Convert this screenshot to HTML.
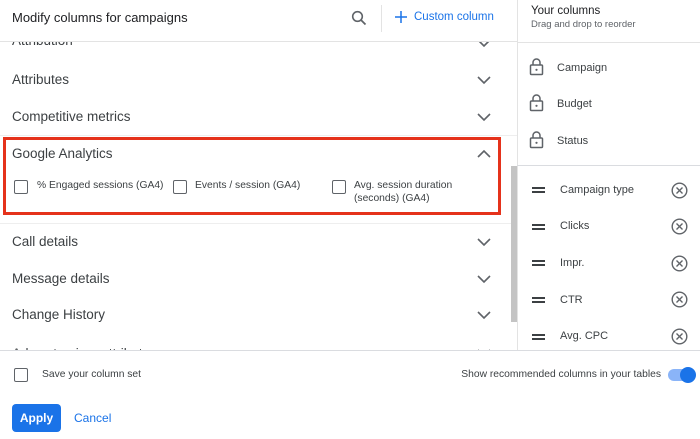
<!DOCTYPE html>
<html><head><meta charset="utf-8"><style>
*{margin:0;padding:0;box-sizing:border-box}
body{width:700px;height:439px;overflow:hidden;background:#fff;font-family:"Liberation Sans",sans-serif;color:#202124;position:relative}
.a{position:absolute;white-space:nowrap}
.row{position:absolute;left:12px;font-size:13.5px;color:#3c4043}
.chev{position:absolute;left:477px}
.cb{position:absolute;width:14px;height:14px;border:1.6px solid #5f6368;border-radius:2px}
.lab{position:absolute;font-size:10.3px;color:#3c4043;line-height:13px}
.rt{position:absolute;left:557px;font-size:11px;color:#3c4043}
.rt2{position:absolute;left:560px;font-size:11px;color:#3c4043}
</style></head><body>
<div class="a" style="left:0;top:0;width:517px;height:350px;overflow:hidden">
 <div class="a" style="left:12px;top:33px;font-size:13.5px;color:#3c4043">Attribution</div>
 <svg class="chev" style="top:38px" width="14" height="10"><path d="M1 2l6 6 6-6" fill="none" stroke="#5f6368" stroke-width="1.6"/></svg>
 <div class="a" style="left:0;top:0;width:517px;height:42px;background:#fff;border-bottom:1px solid #e3e3e3"></div>
</div>
<div class="a" style="left:12px;top:10px;font-size:13px;color:#202124">Modify columns for campaigns</div>
<svg class="a" style="left:351px;top:10px" width="16" height="16"><circle cx="6.5" cy="6.5" r="4.8" fill="none" stroke="#5f6368" stroke-width="1.6"/><path d="M10 10l4.5 4.5" stroke="#5f6368" stroke-width="1.8"/></svg>
<div class="a" style="left:381px;top:5px;width:1px;height:27px;background:#e3e3e3"></div>
<svg class="a" style="left:395px;top:11px" width="12" height="12"><path d="M6 0v12M0 6h12" stroke="#1a73e8" stroke-width="1.5"/></svg>
<div class="a" style="left:414px;top:11px;font-size:11.5px;color:#1a73e8">Custom column</div>

<div class="row" style="top:72px">Attributes</div>
<svg class="chev" style="top:75px" width="14" height="10"><path d="M1 2l6 6 6-6" fill="none" stroke="#5f6368" stroke-width="1.6"/></svg>
<div class="row" style="top:109px">Competitive metrics</div>
<svg class="chev" style="top:112px" width="14" height="10"><path d="M1 2l6 6 6-6" fill="none" stroke="#5f6368" stroke-width="1.6"/></svg>
<div class="a" style="left:0;top:135px;width:517px;height:1px;background:#eee"></div>

<div class="a" style="left:3px;top:137px;width:498px;height:78px;border:3px solid #e5321b"></div>
<div class="row" style="top:146px">Google Analytics</div>
<svg class="chev" style="top:149px" width="14" height="10"><path d="M1 8l6-6 6 6" fill="none" stroke="#5f6368" stroke-width="1.6"/></svg>
<div class="cb" style="left:14px;top:180px"></div>
<div class="lab" style="left:37px;top:179px">% Engaged sessions (GA4)</div>
<div class="cb" style="left:173px;top:180px"></div>
<div class="lab" style="left:195px;top:179px">Events / session (GA4)</div>
<div class="cb" style="left:332px;top:180px"></div>
<div class="lab" style="left:354px;top:179px">Avg. session duration<br>(seconds) (GA4)</div>
<div class="a" style="left:0;top:223px;width:511px;height:1px;background:#eee"></div>

<div class="row" style="top:234px">Call details</div>
<svg class="chev" style="top:237px" width="14" height="10"><path d="M1 2l6 6 6-6" fill="none" stroke="#5f6368" stroke-width="1.6"/></svg>
<div class="row" style="top:271px">Message details</div>
<svg class="chev" style="top:274px" width="14" height="10"><path d="M1 2l6 6 6-6" fill="none" stroke="#5f6368" stroke-width="1.6"/></svg>
<div class="row" style="top:307px">Change History</div>
<svg class="chev" style="top:310px" width="14" height="10"><path d="M1 2l6 6 6-6" fill="none" stroke="#5f6368" stroke-width="1.6"/></svg>
<div class="a" style="left:0;top:340px;width:511px;height:10px;overflow:hidden"><div class="a" style="left:12px;top:6px;font-size:13.5px;color:#3c4043">Ad customizer attributes</div><svg class="a" style="left:477px;top:8px" width="14" height="10"><path d="M1 2l6 6 6-6" fill="none" stroke="#5f6368" stroke-width="1.6"/></svg></div>
<div class="a" style="left:511px;top:166px;width:6px;height:156px;background:#c4c4c4"></div>

<div class="a" style="left:517px;top:0;width:1px;height:350px;background:#e3e3e3"></div>
<div class="a" style="left:531px;top:5px;font-size:11.5px;color:#202124">Your columns</div>
<div class="a" style="left:531px;top:19px;font-size:9.5px;color:#5f6368">Drag and drop to reorder</div>
<div class="a" style="left:517px;top:42px;width:183px;height:1px;background:#e3e3e3"></div>
<svg class="a" style="left:529px;top:58px" width="15" height="18"><path d="M4 7V4.5a3.5 3.5 0 0 1 7 0V7" fill="none" stroke="#5f6368" stroke-width="1.5"/><rect x="1.5" y="7" width="12" height="9.5" rx="1" fill="none" stroke="#5f6368" stroke-width="1.5"/><circle cx="7.5" cy="11.8" r="1.1" fill="#5f6368"/></svg>
<div class="rt" style="top:62px">Campaign</div>
<svg class="a" style="left:529px;top:94px" width="15" height="18"><path d="M4 7V4.5a3.5 3.5 0 0 1 7 0V7" fill="none" stroke="#5f6368" stroke-width="1.5"/><rect x="1.5" y="7" width="12" height="9.5" rx="1" fill="none" stroke="#5f6368" stroke-width="1.5"/><circle cx="7.5" cy="11.8" r="1.1" fill="#5f6368"/></svg>
<div class="rt" style="top:98px">Budget</div>
<svg class="a" style="left:529px;top:131px" width="15" height="18"><path d="M4 7V4.5a3.5 3.5 0 0 1 7 0V7" fill="none" stroke="#5f6368" stroke-width="1.5"/><rect x="1.5" y="7" width="12" height="9.5" rx="1" fill="none" stroke="#5f6368" stroke-width="1.5"/><circle cx="7.5" cy="11.8" r="1.1" fill="#5f6368"/></svg>
<div class="rt" style="top:135px">Status</div>
<div class="a" style="left:517px;top:165px;width:183px;height:1px;background:#dadce0"></div>

<div class="a" style="left:532px;top:187px;width:13px;height:2px;background:#3c4043;box-shadow:0 4px 0 #3c4043"></div>
<div class="rt2" style="top:184px">Campaign type</div>
<svg class="a" style="left:671px;top:182px" width="17" height="17"><circle cx="8.5" cy="8.5" r="7.3" fill="none" stroke="#5f6368" stroke-width="1.4"/><path d="M5.5 5.5l6 6M11.5 5.5l-6 6" stroke="#5f6368" stroke-width="1.4"/></svg>
<div class="a" style="left:532px;top:224px;width:13px;height:2px;background:#3c4043;box-shadow:0 4px 0 #3c4043"></div>
<div class="rt2" style="top:220px">Clicks</div>
<svg class="a" style="left:671px;top:218px" width="17" height="17"><circle cx="8.5" cy="8.5" r="7.3" fill="none" stroke="#5f6368" stroke-width="1.4"/><path d="M5.5 5.5l6 6M11.5 5.5l-6 6" stroke="#5f6368" stroke-width="1.4"/></svg>
<div class="a" style="left:532px;top:260px;width:13px;height:2px;background:#3c4043;box-shadow:0 4px 0 #3c4043"></div>
<div class="rt2" style="top:257px">Impr.</div>
<svg class="a" style="left:671px;top:255px" width="17" height="17"><circle cx="8.5" cy="8.5" r="7.3" fill="none" stroke="#5f6368" stroke-width="1.4"/><path d="M5.5 5.5l6 6M11.5 5.5l-6 6" stroke="#5f6368" stroke-width="1.4"/></svg>
<div class="a" style="left:532px;top:297px;width:13px;height:2px;background:#3c4043;box-shadow:0 4px 0 #3c4043"></div>
<div class="rt2" style="top:294px">CTR</div>
<svg class="a" style="left:671px;top:291px" width="17" height="17"><circle cx="8.5" cy="8.5" r="7.3" fill="none" stroke="#5f6368" stroke-width="1.4"/><path d="M5.5 5.5l6 6M11.5 5.5l-6 6" stroke="#5f6368" stroke-width="1.4"/></svg>
<div class="a" style="left:532px;top:334px;width:13px;height:2px;background:#3c4043;box-shadow:0 4px 0 #3c4043"></div>
<div class="rt2" style="top:330px">Avg. CPC</div>
<svg class="a" style="left:671px;top:328px" width="17" height="17"><circle cx="8.5" cy="8.5" r="7.3" fill="none" stroke="#5f6368" stroke-width="1.4"/><path d="M5.5 5.5l6 6M11.5 5.5l-6 6" stroke="#5f6368" stroke-width="1.4"/></svg>

<div class="a" style="left:0;top:350px;width:700px;height:1px;background:#dadce0"></div>
<div class="cb" style="left:14px;top:368px"></div>
<div class="a" style="left:42px;top:369px;font-size:10.3px;color:#3c4043">Save your column set</div>
<div class="a" style="right:39px;top:369px;font-size:10.3px;color:#3c4043">Show recommended columns in your tables</div>
<div class="a" style="left:668px;top:369px;width:26px;height:12px;border-radius:6px;background:#8ab4f8"></div>
<div class="a" style="left:680px;top:367px;width:16px;height:16px;border-radius:50%;background:#1a73e8"></div>
<div class="a" style="left:12px;top:404px;width:49px;height:28px;border-radius:4px;background:#1a73e8;color:#fff;font-size:12px;font-weight:bold;text-align:center;line-height:28px">Apply</div>
<div class="a" style="left:74px;top:411px;font-size:12px;color:#1a73e8">Cancel</div>
</body></html>
